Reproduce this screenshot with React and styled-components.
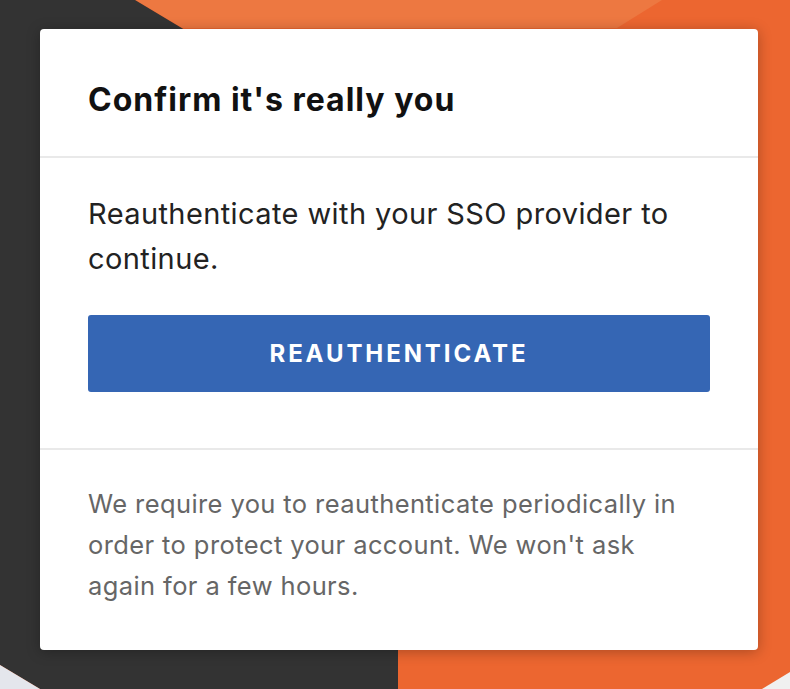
import React from "react";
import styled, { createGlobalStyle } from "styled-components";

const Global = createGlobalStyle`
  html, body { margin: 0; padding: 0; }
  body { font-family: Inter, "Liberation Sans", sans-serif; }
  * { box-sizing: border-box; }
`;

const Page = styled.div`
  position: relative;
  width: 790px;
  height: 689px;
  padding: 29px 32px 39px 40px;
  overflow: hidden;
  background: #ec6630;
`;

const Backdrop = styled.svg`
  position: absolute;
  inset: 0;
  z-index: 0;
`;

const Card = styled.div`
  position: relative;
  z-index: 1;
  height: 100%;
  background: #fff;
  border-radius: 4px;
  box-shadow: 0 2px 14px rgba(0, 0, 0, 0.28);
  display: flex;
  flex-direction: column;
`;

const Section = styled.div`
  padding: ${(p) => p.$pad};
  border-top: ${(p) => (p.$divided ? "2px solid #e9e9e9" : "none")};
`;

const Title = styled.h1`
  margin: 0;
  font-size: 32px;
  line-height: 38px;
  font-weight: 700;
  letter-spacing: 1px;
  color: #111;
`;

const Lead = styled.p`
  margin: 0;
  max-width: 610px;
  font-size: 29px;
  line-height: 45px;
  letter-spacing: 0.4px;
  color: #222;
`;

const Button = styled.button`
  display: block;
  width: 100%;
  height: 77px;
  margin-top: 34px;
  border: none;
  border-radius: 3px;
  background: #3566b4;
  color: #fff;
  font-family: Inter, "Liberation Sans", sans-serif;
  font-size: 24px;
  font-weight: 700;
  letter-spacing: 2.9px;
`;

const Note = styled.p`
  margin: 0;
  max-width: 610px;
  font-size: 25.5px;
  line-height: 41px;
  letter-spacing: 0.4px;
  color: #666;
`;

export default function App() {
  return (
    <>
      <Global />
      <Page>
        <Backdrop width="790" height="689" viewBox="0 0 790 689">
          <polygon points="135,0 662,0 617,28 182,28" fill="#ed7841" />
          <polygon points="0,0 135,0 185,30 398,30 398,689 40,689 0,665" fill="#333333" />
          <polygon points="0,665 40,689 0,689" fill="#e4e6ec" />
          <polygon points="790,672 790,689 762,689" fill="#f0f0f0" />
        </Backdrop>
        <Card>
          <Section $pad="52px 48px 37px">
            <Title>Confirm it's really you</Title>
          </Section>
          <Section $divided $pad="33px 48px 56px">
            <Lead>Reauthenticate with your SSO provider to continue.</Lead>
            <Button>REAUTHENTICATE</Button>
          </Section>
          <Section $divided $pad="33px 48px 42px">
            <Note>
              We require you to reauthenticate periodically in order to protect
              your account. We won't ask again for a few hours.
            </Note>
          </Section>
        </Card>
      </Page>
    </>
  );
}
